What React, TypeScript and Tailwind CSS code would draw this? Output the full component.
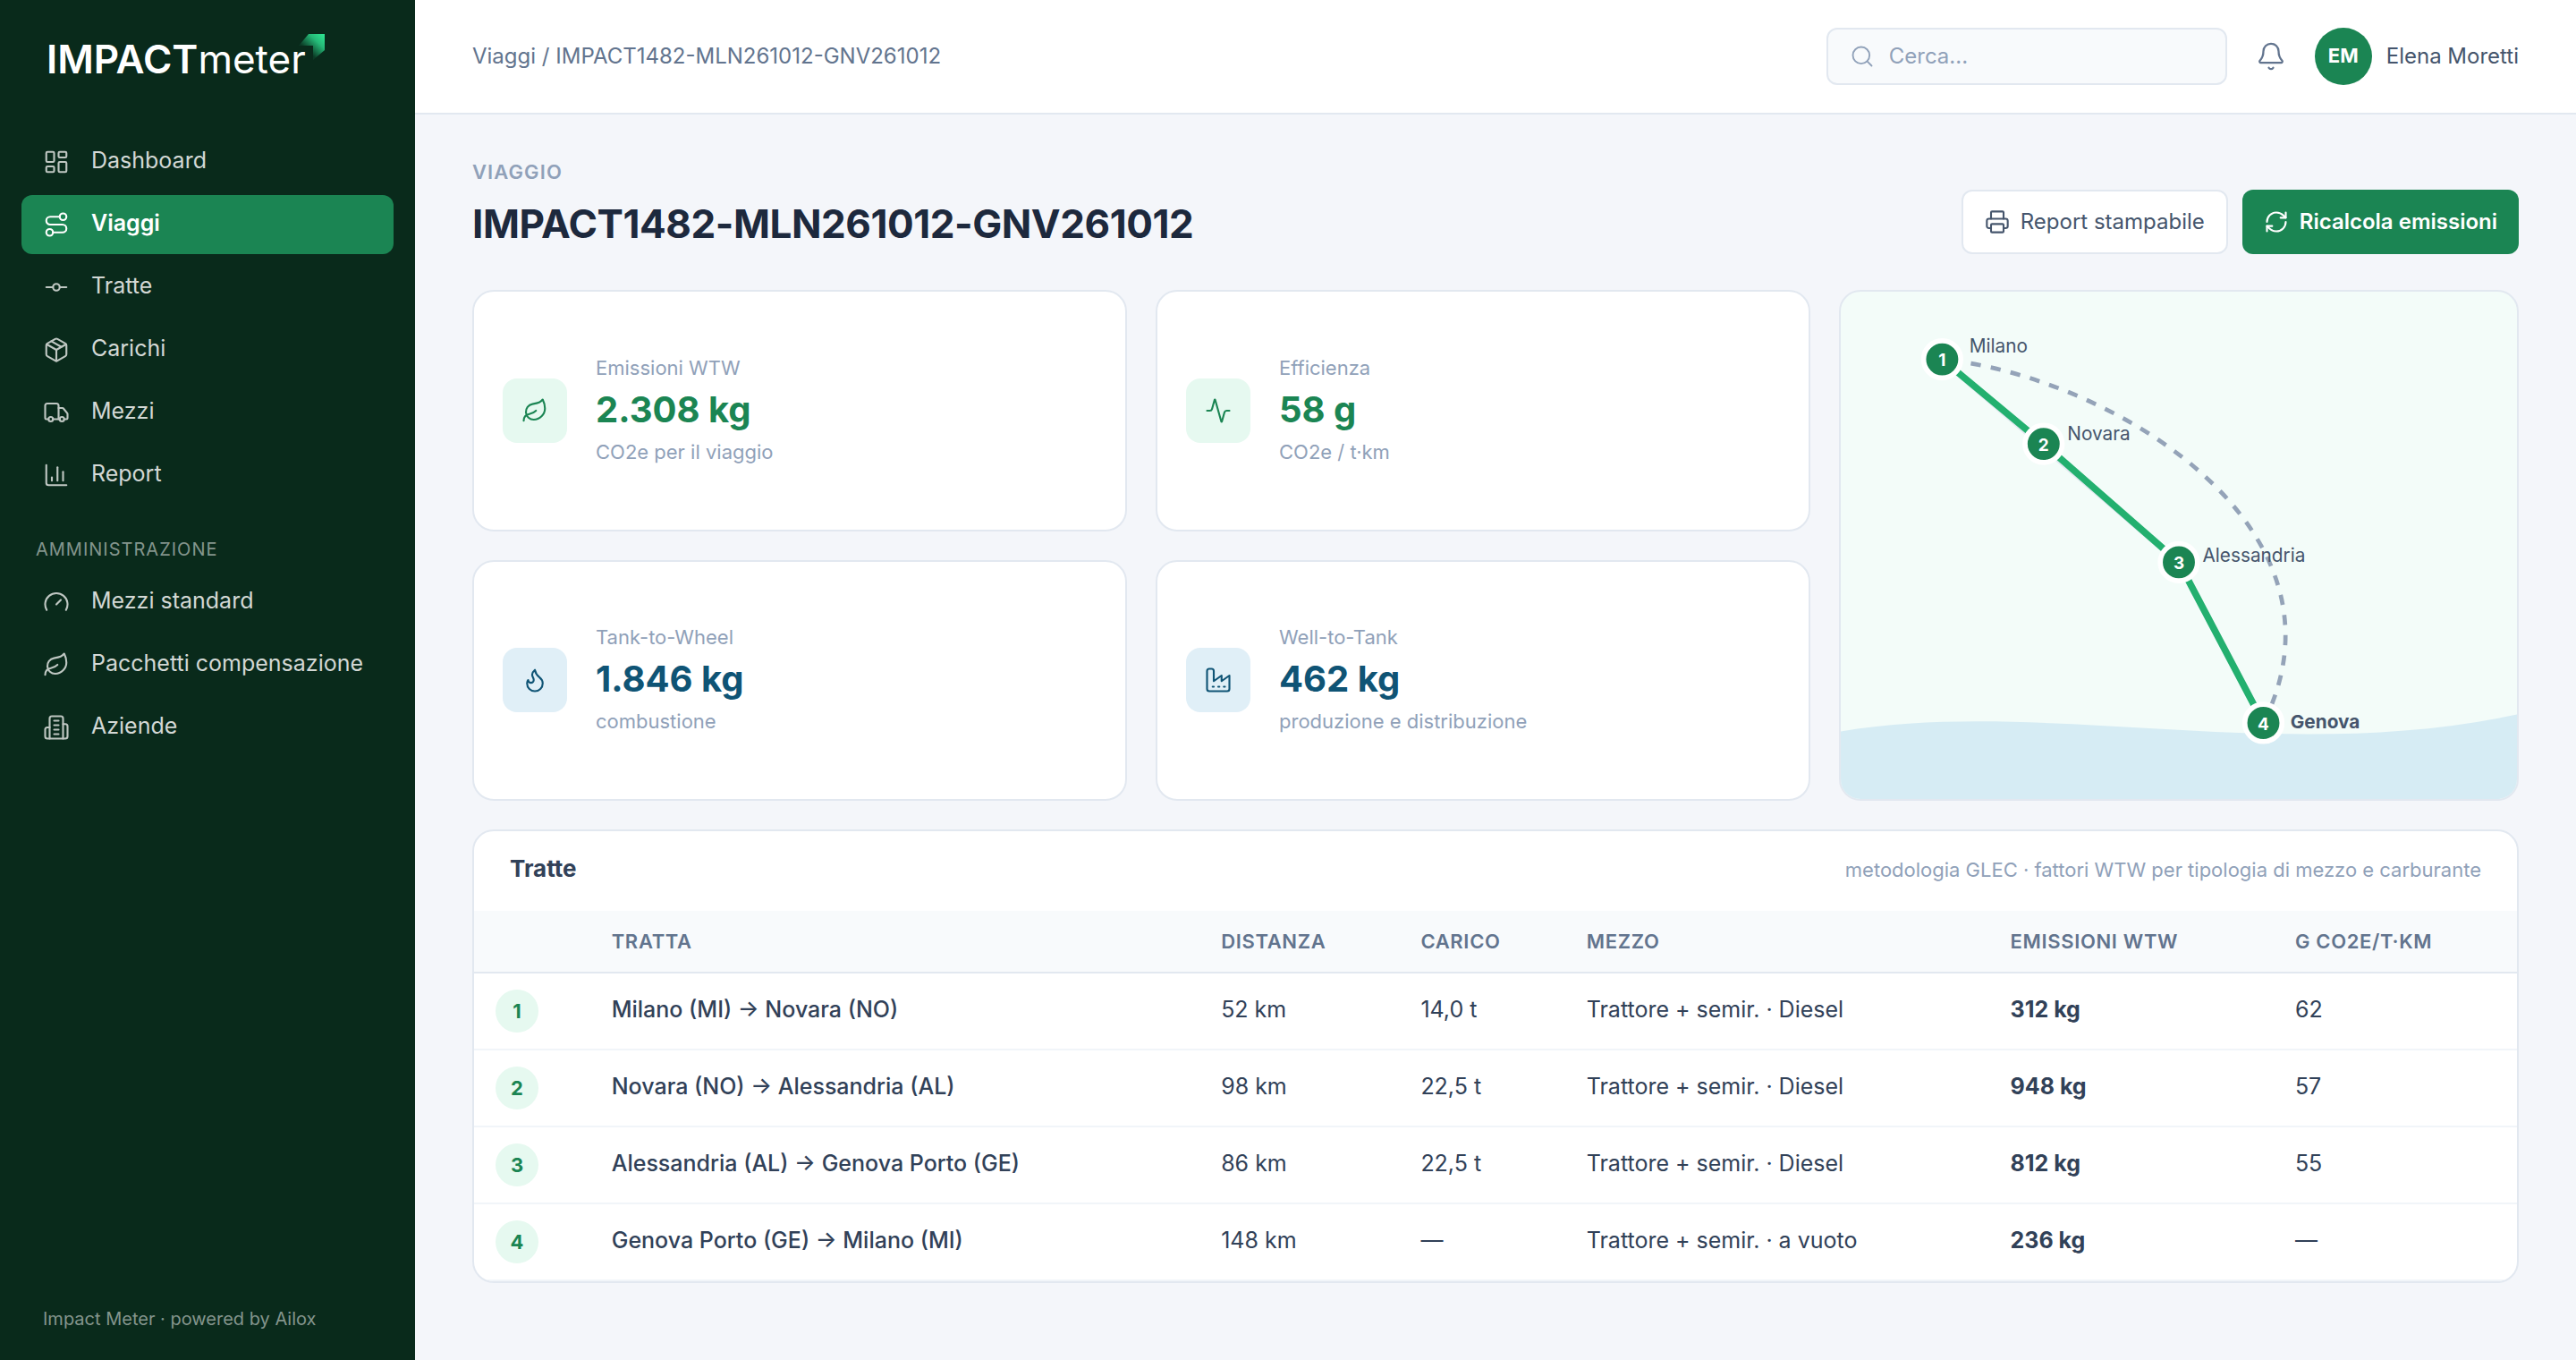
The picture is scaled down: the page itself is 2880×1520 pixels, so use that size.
import type { ReactNode } from "react";
import {
  Activity,
  Bell,
  ChartColumn,
  Gauge,
  GitCommitHorizontal,
  LayoutDashboard,
  Leaf,
  Package,
  Printer,
  RefreshCw,
  Route,
  Search,
  Truck,
} from "lucide-react";

type IconProps = { size?: number; strokeWidth?: number };
type Icon = (props: IconProps) => ReactNode;

function outline(paths: string[]): Icon {
  return function OutlineIcon({ size = 30, strokeWidth = 1.6 }) {
    return (
      <svg
        width={size}
        height={size}
        viewBox="0 0 24 24"
        fill="none"
        stroke="currentColor"
        strokeWidth={strokeWidth}
        strokeLinecap="round"
        strokeLinejoin="round"
        aria-hidden="true"
      >
        {paths.map((d) => (
          <path key={d} d={d} />
        ))}
      </svg>
    );
  };
}

const Building = outline([
  "M6 22V4a2 2 0 0 1 2-2h8a2 2 0 0 1 2 2v18Z",
  "M6 12H4a2 2 0 0 0-2 2v6a2 2 0 0 0 2 2h2",
  "M18 9h2a2 2 0 0 1 2 2v9a2 2 0 0 1-2 2h-2",
  "M10 6h4",
  "M10 10h4",
  "M10 14h4",
  "M10 18h4",
]);

const Factory = outline([
  "M2 20a2 2 0 0 0 2 2h16a2 2 0 0 0 2-2V8l-7 5V8l-7 5V4a2 2 0 0 0-2-2H4a2 2 0 0 0-2 2Z",
  "M17 18h1",
  "M12 18h1",
  "M7 18h1",
]);

const Flame = outline([
  "M8.5 14.5A2.5 2.5 0 0 0 11 12c0-1.38-.5-2-1-3-1.072-2.143-.224-4.054 2-6 .5 2.5 2 4.9 4 6.5 2 1.6 3 3.5 3 5.5a7 7 0 1 1-14 0c0-1.153.433-2.294 1-3a2.5 2.5 0 0 0 2.5 2.5z",
]);

type NavItem = { label: string; icon: Icon; active?: boolean };

const mainNav: NavItem[] = [
  { label: "Dashboard", icon: (p) => <LayoutDashboard {...p} /> },
  { label: "Viaggi", icon: (p) => <Route {...p} />, active: true },
  { label: "Tratte", icon: (p) => <GitCommitHorizontal {...p} /> },
  { label: "Carichi", icon: (p) => <Package {...p} /> },
  { label: "Mezzi", icon: (p) => <Truck {...p} /> },
  { label: "Report", icon: (p) => <ChartColumn {...p} /> },
];

const adminNav: NavItem[] = [
  { label: "Mezzi standard", icon: (p) => <Gauge {...p} /> },
  { label: "Pacchetti compensazione", icon: (p) => <Leaf {...p} /> },
  { label: "Aziende", icon: Building },
];

function NavList({ items }: { items: NavItem[] }) {
  return (
    <ul className="flex flex-col gap-1">
      {items.map(({ label, icon: ItemIcon, active }) => (
        <li key={label}>
          <a
            href="#"
            aria-current={active ? "page" : undefined}
            className={
              active
                ? "flex h-[66px] items-center gap-6 rounded-xl bg-[#1b8553] px-6 font-semibold text-white"
                : "flex h-[66px] items-center gap-6 rounded-xl px-6 text-[#d3d8d5]"
            }
          >
            <span className={active ? "shrink-0" : "shrink-0 opacity-90"}>
              <ItemIcon size={30} strokeWidth={1.7} />
            </span>
            <span className="pb-1 text-[25px] leading-8">{label}</span>
          </a>
        </li>
      ))}
    </ul>
  );
}

function Logo() {
  return (
    <a href="#" aria-label="IMPACTmeter" className="flex pt-10 pb-14 pl-[52px] text-white">
      <span className="text-[44px] leading-[52px] font-semibold">
        IMPACT<span className="font-normal">meter</span>
      </span>
      <svg className="-mt-1 -ml-2.5" width="34" height="34" viewBox="0 0 34 34" aria-hidden="true">
        <defs>
          <linearGradient id="mark" x1="30" y1="4" x2="13" y2="22" gradientUnits="userSpaceOnUse">
            <stop offset="0" stopColor="#2ee08f" />
            <stop offset="0.4" stopColor="#25b877" />
            <stop offset="1" stopColor="#0b3a25" />
          </linearGradient>
        </defs>
        <path d="M13 2h18v18L18 31V15H2Z" fill="url(#mark)" />
      </svg>
    </a>
  );
}

function Sidebar() {
  return (
    <aside className="flex w-[464px] shrink-0 flex-col bg-[#092a1b]">
      <Logo />
      <nav aria-label="Principale" className="flex grow flex-col px-6">
        <NavList items={mainNav} />
        <h2 className="px-4 pt-9 pb-3 text-xl leading-7 tracking-[0.05em] text-[#84958d]">AMMINISTRAZIONE</h2>
        <NavList items={adminNav} />
      </nav>
      <p className="px-12 pb-8 text-xl leading-7 text-[#84958d]">Impact Meter · powered by Ailox</p>
    </aside>
  );
}

function TopBar() {
  return (
    <header className="flex h-32 shrink-0 items-center justify-between border-b-2 border-slate-200 bg-white px-16 text-2xl">
      <nav aria-label="Percorso" className="text-slate-500">
        <a href="#">Viaggi</a> / IMPACT1482-MLN261012-GNV261012
      </nav>
      <div className="flex items-center gap-8">
        <label className="flex h-16 w-[448px] items-center gap-4 rounded-xl border-2 border-slate-200 bg-slate-50 px-6 text-slate-400">
          <Search size={28} strokeWidth={1.6} className="shrink-0" />
          <input
            type="search"
            aria-label="Cerca"
            placeholder="Cerca..."
            className="w-full min-w-0 bg-transparent outline-none placeholder:text-slate-400"
          />
        </label>
        <button type="button" aria-label="Notifiche" className="text-slate-500">
          <Bell size={34} strokeWidth={1.6} />
        </button>
        <div className="flex items-center gap-4">
          <span className="flex size-16 items-center justify-center rounded-full bg-[#1b8553] text-[22px] font-bold text-white">
            EM
          </span>
          <span className="text-slate-600">Elena Moretti</span>
        </div>
      </div>
    </header>
  );
}

function PageHeading() {
  return (
    <div className="flex items-end justify-between">
      <div className="pb-1">
        <p className="text-[22px] leading-8 font-semibold tracking-[0.05em] text-slate-400">VIAGGIO</p>
        <h1 className="mt-3 text-[44px] leading-[60px] font-bold tracking-[-0.01em] text-slate-800">
          IMPACT1482-MLN261012-GNV261012
        </h1>
      </div>
      <div className="flex gap-4 text-2xl">
        <button
          type="button"
          className="flex h-[72px] items-center gap-3 rounded-xl border-2 border-slate-200 bg-white px-6 text-slate-600"
        >
          <Printer size={28} strokeWidth={1.8} />
          Report stampabile
        </button>
        <button
          type="button"
          className="flex h-[72px] items-center gap-3 rounded-xl bg-[#1b8553] px-6 font-semibold text-white"
        >
          <RefreshCw size={28} strokeWidth={1.8} />
          Ricalcola emissioni
        </button>
      </div>
    </div>
  );
}

type Metric = { label: string; value: string; note: string; icon: Icon; tone: "green" | "blue" };

const metrics: Metric[] = [
  { label: "Emissioni WTW", value: "2.308 kg", note: "CO2e per il viaggio", icon: (p) => <Leaf {...p} />, tone: "green" },
  { label: "Efficienza", value: "58 g", note: "CO2e / t·km", icon: (p) => <Activity {...p} />, tone: "green" },
  { label: "Tank-to-Wheel", value: "1.846 kg", note: "combustione", icon: Flame, tone: "blue" },
  { label: "Well-to-Tank", value: "462 kg", note: "produzione e distribuzione", icon: Factory, tone: "blue" },
];

function MetricCard({ label, value, note, icon: MetricIcon, tone }: Metric) {
  const green = tone === "green";
  return (
    <section className="flex items-center gap-8 rounded-3xl border-2 border-slate-200 bg-white px-8">
      <span
        className={
          green
            ? "flex size-[72px] shrink-0 items-center justify-center rounded-2xl bg-[#e6f9f0] text-[#1b8553]"
            : "flex size-[72px] shrink-0 items-center justify-center rounded-2xl bg-[#e0eff7] text-[#0f5475]"
        }
      >
        <MetricIcon size={30} strokeWidth={1.7} />
      </span>
      <div className="pb-0.5 text-[22px] leading-[34px] text-slate-400">
        <h2>{label}</h2>
        <p
          className={
            green
              ? "text-[40px] leading-[60px] font-bold text-[#1b8553]"
              : "text-[40px] leading-[60px] font-bold text-[#0f5475]"
          }
        >
          {value}
        </p>
        <p>{note}</p>
      </div>
    </section>
  );
}

const stops = [
  { n: 1, name: "Milano", x: 60, y: 40, labelX: 76, labelY: 36 },
  { n: 2, name: "Novara", x: 120, y: 90, labelX: 134, labelY: 88 },
  { n: 3, name: "Alessandria", x: 200, y: 160, labelX: 214, labelY: 160 },
  { n: 4, name: "Genova", x: 250, y: 255, labelX: 266, labelY: 258, strong: true },
];

function RouteMap() {
  return (
    <section aria-label="Mappa del viaggio" className="row-span-2 overflow-hidden rounded-3xl border-2 border-slate-200 bg-[#f3fcf9]">
      <svg viewBox="0 0 400 300" className="block w-full" role="img" aria-label="Percorso Milano, Novara, Alessandria, Genova">
        <path d="M0 260C120 240 260 280 400 250V300H0Z" fill="#d6ecf4" />
        <path d="M60 40 200 160 250 255" fill="none" stroke="#e2e8f0" strokeWidth="4" />
        <path d="M250 255C308 140 160 50 60 40" fill="none" stroke="#94a3b8" strokeWidth="2.5" strokeDasharray="6 6" />
        <path d="M60 40 120 90 200 160 250 255" fill="none" stroke="#23b06f" strokeWidth="4" />
        {stops.map((s) => (
          <g key={s.n}>
            <circle cx={s.x} cy={s.y} r="11" fill="#1b8553" stroke="#fff" strokeWidth="3" />
            <text x={s.x} y={s.y + 4} textAnchor="middle" className="fill-white text-[10px] font-bold">
              {s.n}
            </text>
            <text
              x={s.labelX}
              y={s.labelY}
              className={s.strong ? "fill-slate-600 text-[11px] font-bold" : "fill-slate-600 text-[11px]"}
            >
              {s.name}
            </text>
          </g>
        ))}
      </svg>
    </section>
  );
}

const columns = ["TRATTA", "DISTANZA", "CARICO", "MEZZO", "EMISSIONI WTW", "G CO2E/T·KM"];

const legs = [
  { leg: "Milano (MI) → Novara (NO)", distance: "52 km", load: "14,0 t", vehicle: "Trattore + semir. · Diesel", wtw: "312 kg", rate: "62" },
  { leg: "Novara (NO) → Alessandria (AL)", distance: "98 km", load: "22,5 t", vehicle: "Trattore + semir. · Diesel", wtw: "948 kg", rate: "57" },
  { leg: "Alessandria (AL) → Genova Porto (GE)", distance: "86 km", load: "22,5 t", vehicle: "Trattore + semir. · Diesel", wtw: "812 kg", rate: "55" },
  { leg: "Genova Porto (GE) → Milano (MI)", distance: "148 km", load: "—", vehicle: "Trattore + semir. · a vuoto", wtw: "236 kg", rate: "—" },
];

function LegsTable() {
  return (
    <section className="overflow-hidden rounded-3xl border-2 border-slate-200 bg-white">
      <div className="flex items-baseline justify-between px-10 pt-6 pb-7 leading-9">
        <h2 className="text-[26px] font-bold text-slate-700">Tratte</h2>
        <p className="text-[22px] text-slate-400">metodologia GLEC · fattori WTW per tipologia di mezzo e carburante</p>
      </div>
      <table className="w-full border-separate border-spacing-0 text-left text-[25px] leading-8 text-slate-700">
        <thead>
          <tr className="bg-slate-50 text-[22px] tracking-[0.03em] text-slate-500">
            <td className="border-b-2 border-slate-200 px-6" />
            {columns.map((c) => (
              <th key={c} scope="col" className="h-[70px] border-b-2 border-slate-200 px-6 font-semibold">
                {c}
              </th>
            ))}
          </tr>
        </thead>
        <tbody>
          {legs.map((row, i) => (
            <tr key={row.leg}>
              <td className="h-[86px] border-b-2 border-slate-100 px-6">
                <span className="flex size-12 items-center justify-center rounded-full bg-[#e6f9f0] text-[22px] font-bold text-[#1b8553]">
                  {i + 1}
                </span>
              </td>
              <td className="border-b-2 border-slate-100 px-6 pb-1 font-medium">{row.leg}</td>
              <td className="border-b-2 border-slate-100 px-6 pb-1">{row.distance}</td>
              <td className="border-b-2 border-slate-100 px-6 pb-1">{row.load}</td>
              <td className="border-b-2 border-slate-100 px-6 pb-1">{row.vehicle}</td>
              <td className="border-b-2 border-slate-100 px-6 pb-1 font-bold">{row.wtw}</td>
              <td className="border-b-2 border-slate-100 px-6 pb-1">{row.rate}</td>
            </tr>
          ))}
        </tbody>
      </table>
    </section>
  );
}

export default function App() {
  return (
    <div className="flex min-h-screen bg-[#f4f6fa] font-[Inter,sans-serif]">
      <Sidebar />
      <div className="flex min-w-0 grow flex-col">
        <TopBar />
        <main className="px-16 pt-12 pb-16">
          <PageHeading />
          <div className="mt-10 mb-8 grid grid-cols-[732fr_732fr_760fr] grid-rows-2 gap-8">
            <MetricCard {...metrics[0]} />
            <MetricCard {...metrics[1]} />
            <RouteMap />
            <MetricCard {...metrics[2]} />
            <MetricCard {...metrics[3]} />
          </div>
          <LegsTable />
        </main>
      </div>
    </div>
  );
}
